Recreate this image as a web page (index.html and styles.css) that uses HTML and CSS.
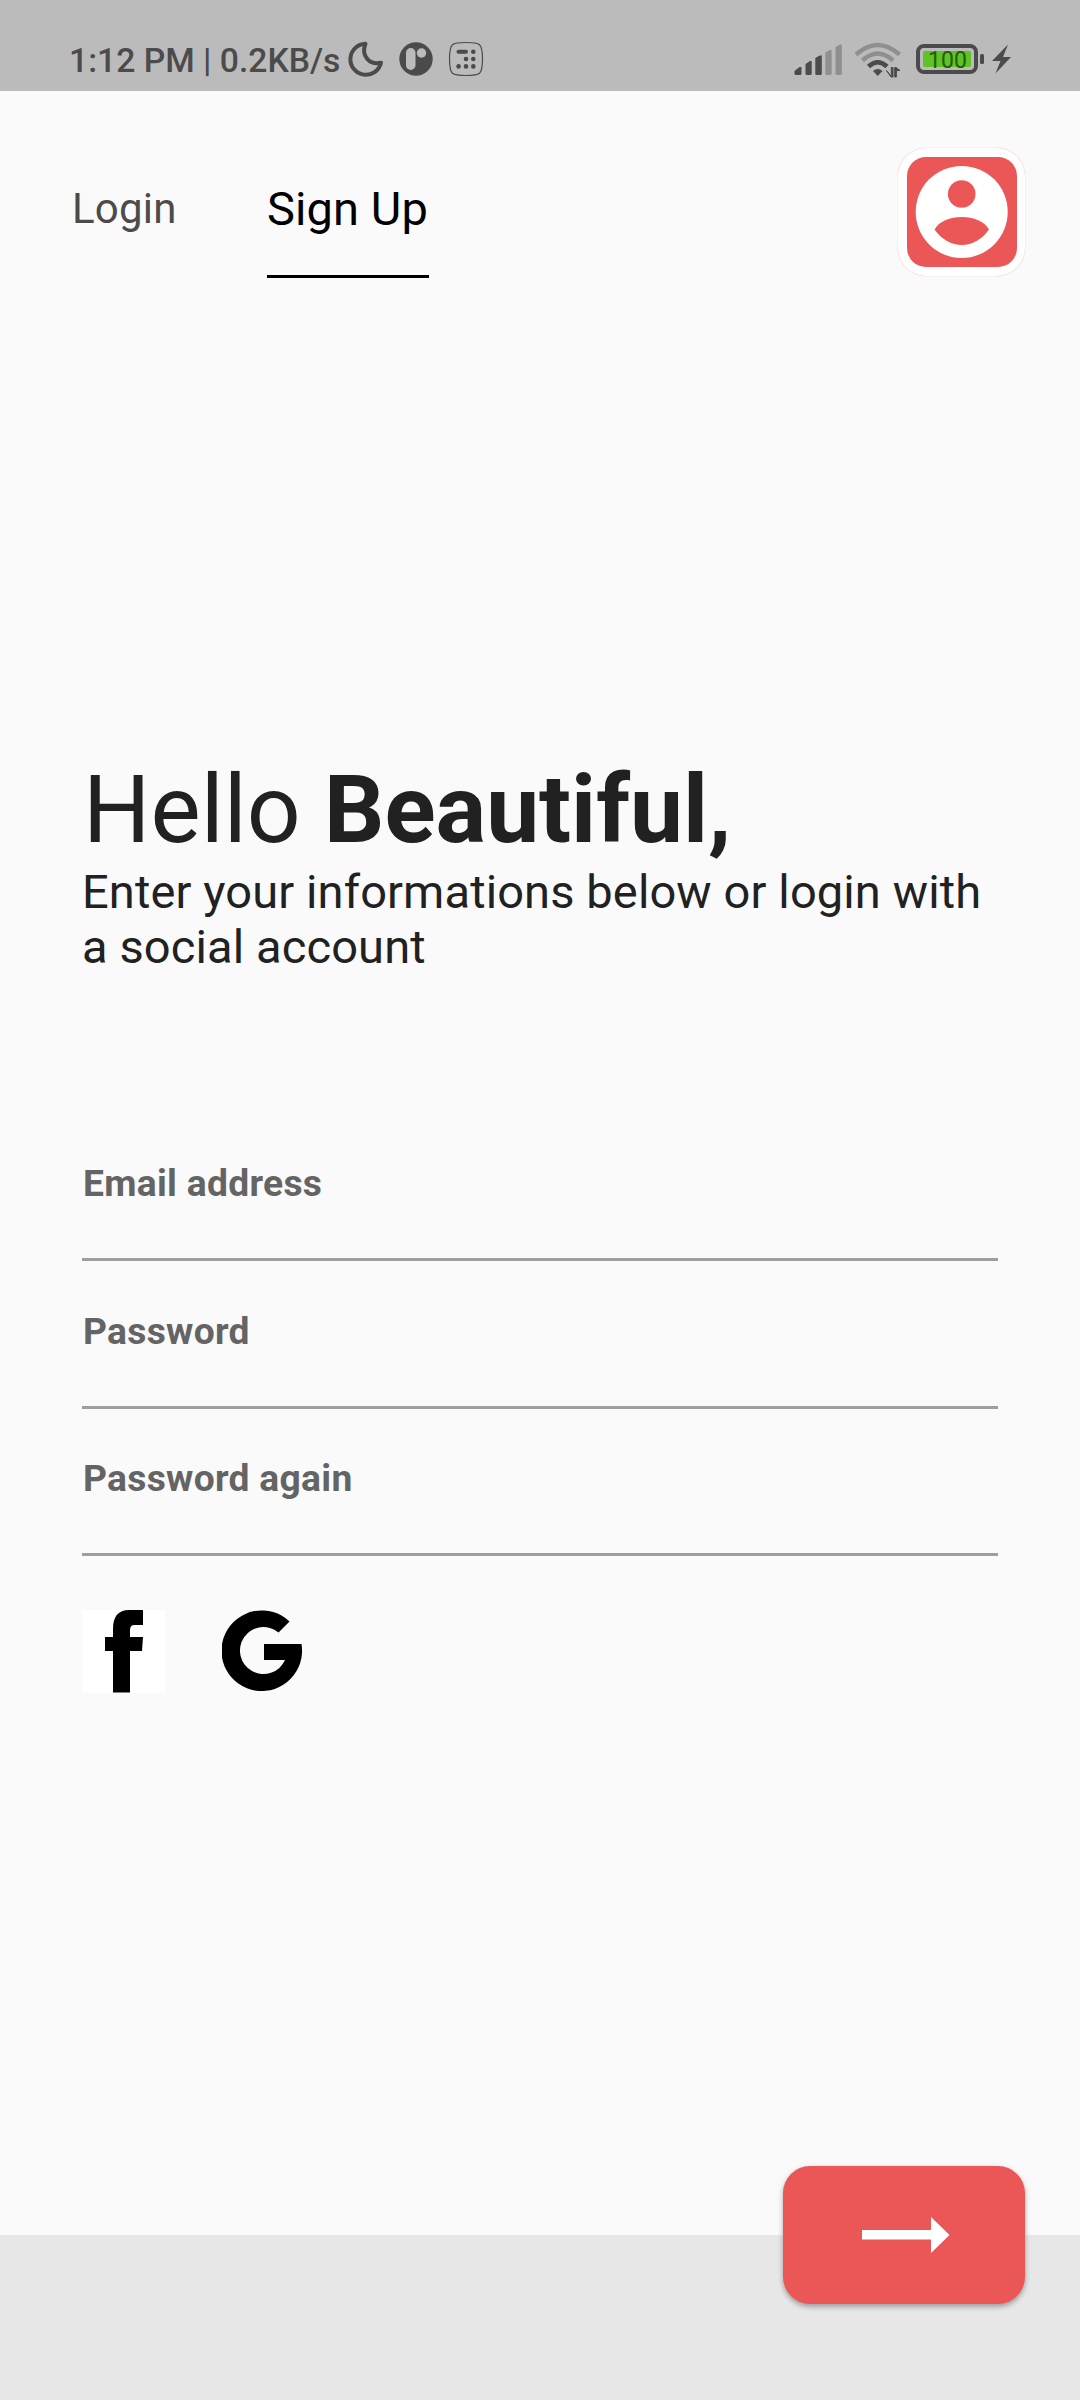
FILE: index.html
```html
<!DOCTYPE html>
<html lang="en">
<head>
<meta charset="utf-8">
<title>Sign Up</title>
<link rel="stylesheet" href="styles.css">
</head>
<body>
<div class="status">
  <span class="status-text">1:12 PM | 0.2KB/s</span>
  <svg class="status-left" width="140" height="40" viewBox="346 40 140 40">
    <path d="M365.500 43.800A15.500 15.500 0 1 0 381 62.800C370 65.500 360.500 56 365.500 43.800Z" fill="none" stroke="#4b4b4b" stroke-width="4" stroke-linejoin="round"/>
    <circle cx="416" cy="59" r="16.700" fill="#4b4b4b"/>
    <rect x="406" y="48" width="9.500" height="22" rx="4.700" fill="#bbb"/>
    <circle cx="421.500" cy="53" r="4.700" fill="#bbb"/>
    <path d="M466 42.500C480 42.500 482.500 43 482.500 59S480 75.500 466 75.500 449.500 75 449.500 59 452 42.500 466 42.500Z" fill="none" stroke="#4b4b4b" stroke-width="1.200"/>
    <path d="M458.500 51.800h7.500" stroke="#4b4b4b" stroke-width="4" stroke-linecap="round"/>
    <g fill="#4b4b4b"><circle cx="473.300" cy="51.800" r="2.300"/><circle cx="466" cy="59" r="2.300"/><circle cx="473.300" cy="59" r="2.300"/><circle cx="458.600" cy="66.400" r="2.300"/><circle cx="466" cy="66.400" r="2.300"/><circle cx="473.300" cy="66.400" r="2.300"/></g>
  </svg>
  <svg class="status-right" width="222" height="40" viewBox="792 40 222 40">
    <g fill="#4b4b4b"><path d="M794.500 71l5-4h2v6.500q0 1.500-1.500 1.500h-4q-1.500 0-1.500-1.500z"/><path d="M805.500 64l4.500-3h1.700v12.500q0 1.500-1.500 1.500h-3.200q-1.500 0-1.500-1.500z"/><path d="M815.300 58l4.500-2.500h2v18q0 1.500-1.500 1.500h-3.500q-1.500 0-1.500-1.500z"/></g>
    <g fill="#8f8f8f"><path d="M825.300 52.500l4.500-2.500h1.800v23.500q0 1.500-1.500 1.500h-3.300q-1.500 0-1.500-1.500z"/><path d="M835.500 47l4.500-2.500h1.800v29q0 1.500-1.500 1.500h-3.300q-1.500 0-1.500-1.500z"/></g>
    <g fill="none" stroke-width="4.500"><path d="M856 54.500Q877.700 35.500 899.500 54.500M862.500 60.500Q877.700 46.500 893 60.500" stroke="#8f8f8f"/><path d="M868.500 66.500Q877.700 58 887 66.500" stroke="#4b4b4b"/></g>
    <path d="M873 71q4.700-4 9.500 0l-4.800 5z" fill="#4b4b4b"/>
    <path d="M886.500 70.500l4.800 6V67.500h1.700v9.500h-2zM894.700 67.500v9.500h1.700v-6.500h3.600l-4-3z" fill="#4b4b4b" stroke="#4b4b4b"/>
    <rect x="918" y="46" width="58" height="26" rx="6" fill="none" stroke="#4b4b4b" stroke-width="4"/>
    <rect x="923" y="51" width="48" height="16" rx="2" fill="#5fc225"/>
    <rect x="980" y="54" width="4" height="10" rx="1.500" fill="#4b4b4b"/>
    <text class="battery-level" x="947.500" y="67.500" text-anchor="middle">100</text>
    <path d="M1008 44.500L992 61h8.500l-5 12.500L1011 57h-8z" fill="#4b4b4b"/>
  </svg>
</div>
<header class="top">
  <nav class="tabs">
    <a class="tab">Login</a>
    <a class="tab tab-active">Sign Up</a>
  </nav>
  <div class="avatar">
    <svg width="110" height="110" viewBox="0 0 110 110">
      <circle cx="54.700" cy="54.900" r="46" fill="#fff"/>
      <circle cx="54.700" cy="37" r="13.800" fill="#eb5757"/>
      <path d="M27.500 72.500C36 55.700 73.500 55.700 82 72.500C68 93 41.500 93 27.500 72.500Z" fill="#eb5757"/>
    </svg>
  </div>
</header>
<main class="content">
  <h1 class="title">Hello <b>Beautiful,</b></h1>
  <p class="lead">Enter your informations below or login with a social account</p>
  <div class="fields">
    <label class="field">Email address</label>
    <label class="field">Password</label>
    <label class="field">Password again</label>
  </div>
  <div class="social">
    <svg class="facebook" width="83" height="83" viewBox="0 0 83 83">
      <path d="M31 82.500V41H23V27h8V19Q31 0 47 0H61V15H52.500Q48 15 48 20V27H61L60 41H48V82.500Z"/>
    </svg>
    <svg width="81" height="83" viewBox="221 1610 81 83">
      <path d="M288.500 1621.500A40.300 40.300 0 1 0 300.500 1644H263V1660H284A23.500 23.500 0 1 1 277.500 1632.500Z"/>
    </svg>
  </div>
</main>
<footer class="bottom">
  <button class="next" aria-label="Next">
    <svg width="88" height="36" viewBox="0 0 88 36"><path d="M0 13H69V0L87.500 18 69 36V22.500H0Z" fill="#fff"/></svg>
  </button>
</footer>
</body>
</html>
```
FILE: styles.css
```css
* { box-sizing: border-box; }
body {
  margin: 0;
  height: 2400px;
  display: flex;
  flex-direction: column;
  background: #fafafa;
  font-family: Roboto, "Liberation Sans", sans-serif;
  color: #212121;
}
svg { display: block; }
.status {
  height: 91px;
  padding: 0 66px 0 69px;
  display: flex;
  background: #bbb;
}
.status-text {
  width: 277px;
  padding-top: 40px;
  font-size: 33.700px;
  font-weight: 500;
  line-height: 41px;
  white-space: nowrap;
  color: #4b4b4b;
}
.status-left { margin-top: 40px; }
.status-right { margin: 40px 0 0 auto; }
.battery-level { font-size: 23px; font-weight: 400; fill: #245c08; }
.top {
  height: 663px;
  padding: 57px 55px 0 72px;
  display: flex;
  justify-content: space-between;
  align-items: flex-start;
}
.tabs { display: flex; }
.tab {
  width: 195px;
  padding-top: 36px;
  font-size: 42px;
  line-height: 50px;
  letter-spacing: 0.200px;
  color: #4b4b4b;
}
.tab-active {
  width: 162px;
  height: 130px;
  padding-top: 33px;
  border-bottom: 3px solid #000;
  font-size: 47px;
  line-height: 56px;
  letter-spacing: 0.100px;
  white-space: nowrap;
  color: #000;
}
.avatar {
  width: 127px;
  height: 128px;
  padding: 9px;
  border-radius: 28px;
  background: #fff;
  box-shadow: 0 0 1px #eb5757a0;
}
.avatar svg { border-radius: 19px; background: #eb5757; }
.content { flex: 1; padding: 0 82px; }
.title {
  margin: 0 0 0 1px;
  font-size: 94.600px;
  font-weight: 400;
  line-height: 111px;
}
.title b { font-weight: 700; }
.lead {
  margin: -1px 0 0;
  font-size: 47px;
  line-height: 55px;
  letter-spacing: 0.120px;
}
.fields { padding-top: 188px; }
.field {
  display: block;
  height: 99px;
  margin-bottom: 48.500px;
  border-bottom: 3px solid #9e9e9e;
  font-size: 37.200px;
  font-weight: 700;
  line-height: 42px;
  letter-spacing: 0.300px;
  text-indent: 1px;
  color: #646464;
}
.social { display: flex; gap: 57px; padding-top: 5px; }
.facebook { background: #fff; }
.bottom {
  height: 165px;
  padding-right: 55px;
  display: flex;
  justify-content: flex-end;
  background: #e7e7e7;
}
.next {
  width: 242px;
  height: 138px;
  margin-top: -69px;
  padding: 0 0 0 4px;
  border: 0;
  border-radius: 27px;
  display: flex;
  align-items: center;
  justify-content: center;
  background: #eb5757;
  box-shadow: 0 3px 5px #0004, 0 1px 8px #0001;
}
```
